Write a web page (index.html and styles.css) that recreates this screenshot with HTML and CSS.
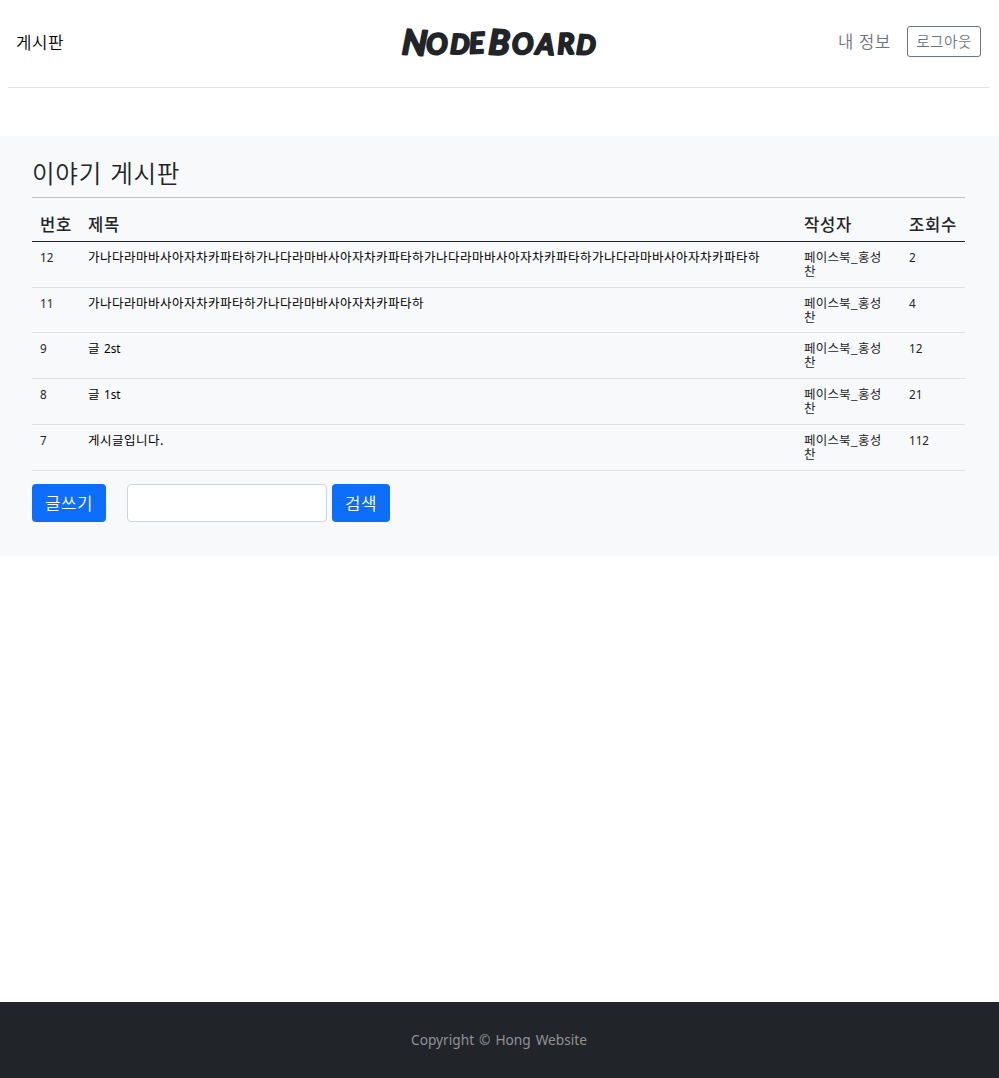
FILE: index.html
```html
<!DOCTYPE html>
<html lang="ko">
<head>
<meta charset="utf-8">
<title>NodeBoard</title>
<link rel="stylesheet" href="styles.css">
</head>
<body>
<header class="header">
  <a class="nav-link">게시판</a>
  <a class="brand"><svg class="wordmark" width="200" height="40" viewBox="398 22 200 40"><text y="54 54.5 53.5 53.5 54 54.5 54 54 54" x="400.5 425.5 449 468.5 487 511.5 534.5 556.5 575" rotate="4 -2 2 -3 3 -3 3 -1 3"><tspan class="cap">N</tspan><tspan>O</tspan><tspan class="narrow">D</tspan><tspan>E</tspan><tspan class="cap">B</tspan><tspan>OAR</tspan><tspan class="narrow">D</tspan></text></svg></a>
  <div class="account"><a class="muted">내 정보</a><button class="logout">로그아웃</button></div>
</header>
<main class="board">
  <h1 class="title">이야기 게시판</h1>
  <table class="table">
    <thead><tr><th class="c1">번호</th><th class="c2">제목</th><th class="c3">작성자</th><th class="c4">조회수</th></tr></thead>
    <tbody>
      <tr><td class="num">12</td><td class="subject">가나다라마바사아자차카파타하가나다라마바사아자차카파타하가나다라마바사아자차카파타하가나다라마바사아자차카파타하</td><td class="author">페이스북_홍성<br>찬</td><td class="num">2</td></tr>
      <tr><td class="num">11</td><td class="subject">가나다라마바사아자차카파타하가나다라마바사아자차카파타하</td><td class="author">페이스북_홍성<br>찬</td><td class="num">4</td></tr>
      <tr><td class="num">9</td><td class="subject">글 <span class="latin">2st</span></td><td class="author">페이스북_홍성<br>찬</td><td class="num">12</td></tr>
      <tr><td class="num">8</td><td class="subject">글 <span class="latin">1st</span></td><td class="author">페이스북_홍성<br>찬</td><td class="num">21</td></tr>
      <tr><td class="num">7</td><td class="subject">게시글입니다.</td><td class="author">페이스북_홍성<br>찬</td><td class="num">112</td></tr>
    </tbody>
  </table>
  <div class="actions">
    <button class="btn write">글쓰기</button>
    <input class="search" type="text" aria-label="검색어">
    <button class="btn find">검색</button>
  </div>
</main>
<footer class="footer">Copyright © Hong Website</footer>
</body>
</html>
```

FILE: styles.css
```css
* { box-sizing: border-box; }
body {
  margin: 0;
  min-height: 1078px;
  display: flex;
  flex-direction: column;
  background: #fff;
  color: #212529;
  font: 16px/24px "Noto Sans", "Noto Sans CJK KR", sans-serif;
  letter-spacing: 1.2px;
}
.header {
  height: 88px;
  margin: 0 10px 48px 8px;
  padding: 0 8px 4px;
  border-bottom: 1px solid #dee2e6;
  display: grid;
  grid-template-columns: 1fr 200px 1fr;
  align-items: center;
}
.nav-link { font-size: 16.8px; font-weight: 350; letter-spacing: .5px; color: #000; padding-top: 2px; }
.brand { display: flex; justify-content: center; }
.wordmark {
  overflow: visible;
  fill: #212529;
  stroke: #212529;
  stroke-width: 2.2;
  stroke-linejoin: round;
  font: italic 700 28.5px Lato, sans-serif;
  letter-spacing: 0;
}
.cap { font-size: 34.5px; }
.narrow { font-size: 27px; }
.account {
  display: flex;
  justify-content: flex-end;
  align-items: center;
  gap: 16px;
  color: #6c757d;
  font-size: 16.6px;
  font-weight: 350;
  letter-spacing: .7px;
}
.logout {
  width: 74px;
  height: 31px;
  padding: 0 0 2px;
  border: 1px solid #6c757d;
  border-radius: 3px;
  background: none;
  color: #6c757d;
  font: 350 14.6px/21px "Noto Sans CJK KR", sans-serif;
  letter-spacing: .5px;
}
.board { height: 420px; padding: 20px 34px 0 32px; background: #f8f9fa; }
.title {
  height: 42px;
  margin: 0 0 9px;
  border-bottom: 1px solid #bfc1c4;
  font: 350 24.6px/33px "Noto Sans CJK KR", sans-serif;
  letter-spacing: .7px;
  word-spacing: .6px;
}
.table { width: 933px; border-collapse: separate; border-spacing: 0; table-layout: fixed; }
.table th {
  height: 35px;
  padding: 1px 8px 0;
  border-bottom: 1px solid #212529;
  font-size: 16.6px;
  font-weight: 500;
  letter-spacing: .73px;
  text-align: left;
}
.c1 { width: 48px; }
.c2 { width: 716px; }
.c3 { width: 105px; }
.c4 { width: 64px; }
.table td {
  height: 46px;
  padding: 7.5px 8px 6px;
  border-bottom: 1px solid #dee2e6;
  font-family: "Noto Sans CJK KR", sans-serif;
  font-size: 12.5px;
  line-height: 14.5px;
  letter-spacing: .5px;
  vertical-align: top;
  white-space: nowrap;
}
.table tr:nth-child(2) td { height: 45px; }
.table .subject { color: #000; }
.table .author { letter-spacing: .2px; }
.table .num, .latin { font-family: "Noto Sans", sans-serif; font-size: 11.7px; letter-spacing: 0; }
.actions { display: flex; margin-top: 13px; }
.btn {
  height: 38px;
  padding: 0 0 1px;
  border: 0;
  border-radius: 4px;
  background: #0d6efd;
  color: #fff;
  font: 350 16.8px/24px "Noto Sans CJK KR", sans-serif;
  letter-spacing: .5px;
}
.write { width: 74px; margin-right: 21px; }
.search { width: 200px; height: 38px; margin-right: 5px; border: 1px solid #ced4da; border-radius: 4px; background: #fff; }
.find { width: 58px; }
.footer {
  height: 76px;
  margin-top: auto;
  padding-right: 1px;
  background: #212529;
  color: #909294;
  font-size: 13.7px;
  line-height: 75px;
  letter-spacing: 0;
  word-spacing: 1.4px;
  text-align: center;
}
```
